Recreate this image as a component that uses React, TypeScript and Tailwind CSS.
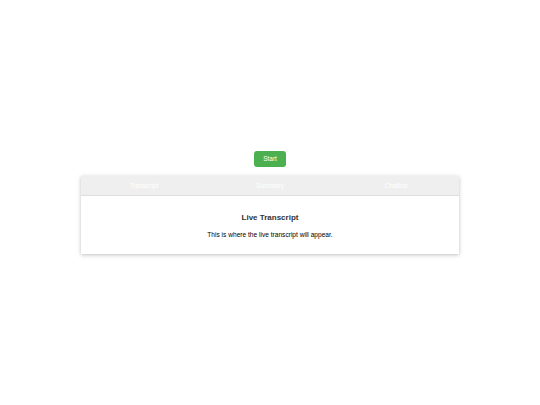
import { useState } from "react";

const tabs = ["Transcript", "Summary", "Chatbot"];

export default function App() {
  const [active, setActive] = useState(0);

  return (
    <div
      className="min-h-screen flex flex-col items-center justify-center bg-white"
      style={{ fontFamily: '"Liberation Sans", Arial, sans-serif' }}
    >
      <button className="h-4 w-8 rounded-[3px] bg-[#4caf50] text-[6.5px] leading-none text-white">
        Start
      </button>

      <div className="mt-[9px] w-[378px] bg-white shadow-[0_1px_4px_rgba(0,0,0,0.25)]">
        <div className="grid grid-cols-3 h-5 bg-[#efefef] border-b border-[#dedede]">
          {tabs.map((t, i) => (
            <button
              key={t}
              onClick={() => setActive(i)}
              className="flex items-center justify-center text-[6.5px] text-white"
            >
              {t}
            </button>
          ))}
        </div>
        <div className="flex flex-col items-center pt-[16px] pb-[14px]">
          <h2 className="text-[8px] font-bold text-[#333]">
            {tabs[active] === "Transcript" ? "Live Transcript" : tabs[active]}
          </h2>
          <p className="mt-[6px] text-[6.6px] text-black">
            This is where the live transcript will appear.
          </p>
        </div>
      </div>
    </div>
  );
}
